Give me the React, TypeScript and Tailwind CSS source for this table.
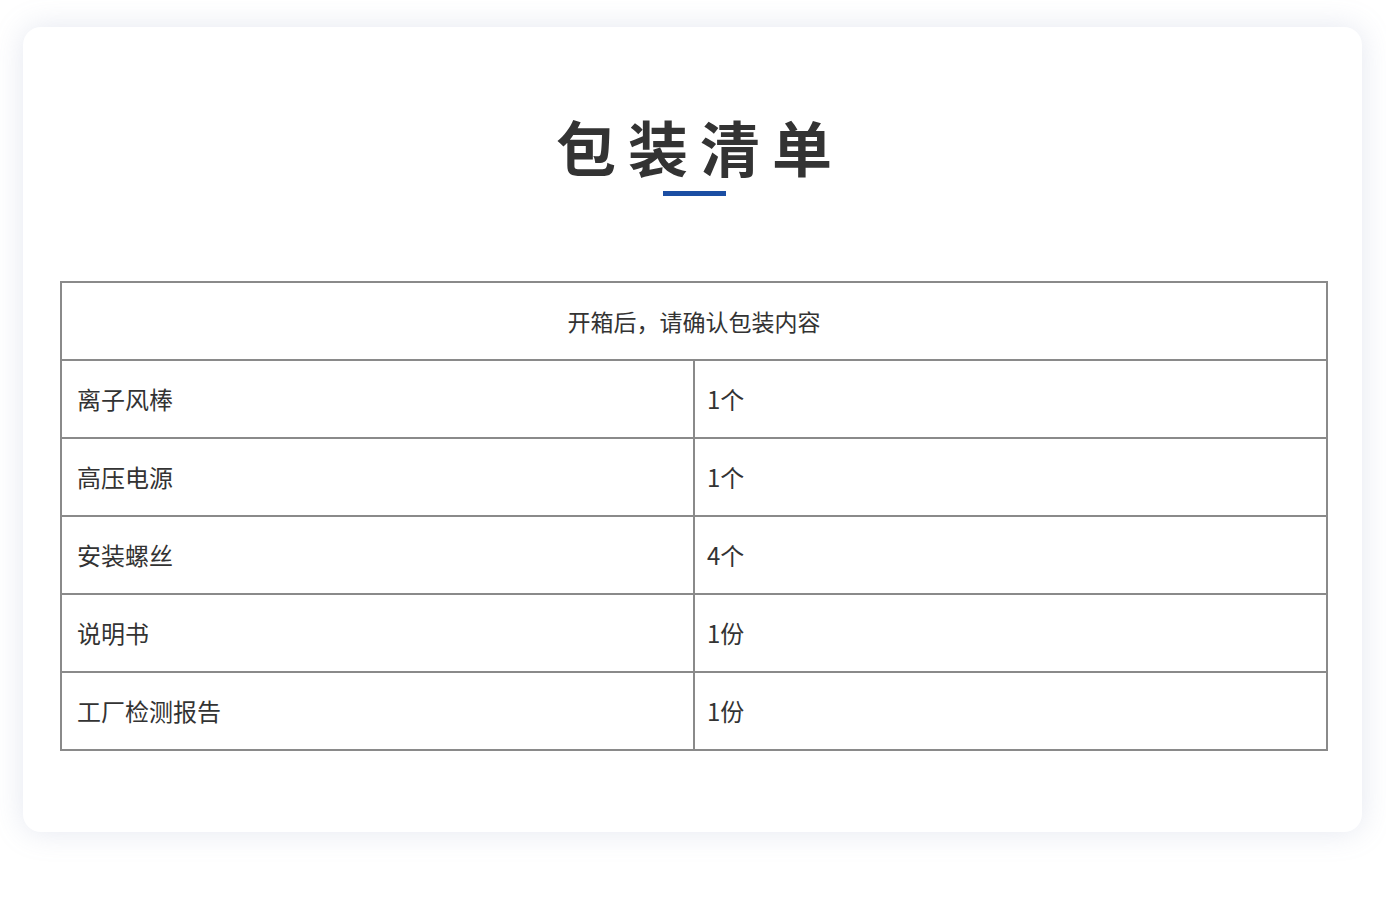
const rows = [
  { name: "离子风棒", qty: "1个" },
  { name: "高压电源", qty: "1个" },
  { name: "安装螺丝", qty: "4个" },
  { name: "说明书", qty: "1份" },
  { name: "工厂检测报告", qty: "1份" },
];

export default function App() {
  return (
    <div
      className="min-h-[912px] bg-white pt-[27px] pl-[23px] pr-[24px] pb-[81px]"
      style={{ fontFamily: '"Noto Sans CJK SC", "Noto Sans", sans-serif' }}
    >
      <div className="rounded-[18px] bg-white pt-[89px] pb-[81px] pl-[37px] pr-[34px] shadow-[0_0_30px_rgba(130,145,185,0.22)]">
        <h1 className="text-center text-[60px] font-bold leading-none tracking-[12px] pl-[12px] text-[#333333]">
          包装清单
        </h1>
        <div className="mx-auto mt-[15px] h-[5px] w-[63px] bg-[#1b4ea3]" />

        <table className="mt-[85px] w-full table-fixed border-collapse text-[24px] text-[#333333]">
          <tbody>
            <tr>
              <td
                colSpan={2}
                className="h-[78px] border-2 border-[#8a8a8a] text-center align-middle text-[23px] leading-none"
              >
                开箱后，请确认包装内容
              </td>
            </tr>
            {rows.map((row) => (
              <tr key={row.name}>
                <td className="h-[78px] border-2 border-[#8a8a8a] pl-[15px] align-middle leading-none">
                  {row.name}
                </td>
                <td className="h-[78px] border-2 border-[#8a8a8a] pl-[12px] align-middle leading-none">
                  {row.qty}
                </td>
              </tr>
            ))}
          </tbody>
        </table>
      </div>
    </div>
  );
}
